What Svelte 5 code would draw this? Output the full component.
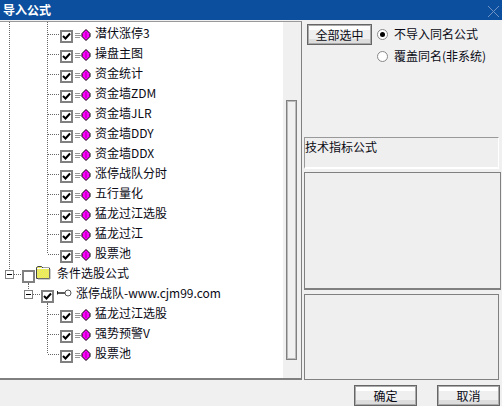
<script>
  const names = ['潜伏涨停3', '操盘主图', '资金统计', '资金墙ZDM', '资金墙JLR', '资金墙DDY', '资金墙DDX', '涨停战队分时', '五行量化', '猛龙过江选股', '猛龙过江', '股票池'];
  const children = ['猛龙过江选股', '强势预警V', '股票池'];
</script>

{#snippet check(x, checked)}
  <rect x={x + 1} y="7" width="11" height="11" fill="#fff" stroke="#808080" stroke-width="2" />
  {#if checked}
    <path d="M{x + 3} 12l2.500 2.500l4.500 -5" fill="none" stroke="#000" stroke-width="2" />
  {/if}
{/snippet}

{#snippet expander(x)}
  <rect x={x + 0.5} y="6.5" width="8" height="8" fill="#fff" stroke="#808080" />
  <path d="M{x + 2} 10.5h5" stroke="#000" />
{/snippet}

{#snippet gem()}
  <path d="M75 9.5h5M75 11.5h6M75 13.5h5" stroke="#999" />
  <path d="M86 5.5l4 4v3l-4 4l-4-4v-3z" fill="#f0f" stroke="#000" />
  <path d="M86 8v6" stroke="#a000a0" />
{/snippet}

{#snippet leaf(last, outer)}
  <svg class="glyphs leaf" width="95" height="20">
    {#if outer}<path class="dots" d="M9.5 0v20" />{/if}
    <path class="dots" d={last ? 'M47.5 0v10' : 'M47.5 0v20'} />
    <path class="dots" d="M48 10.5h12" />
    {@render check(60, true)}
    {@render gem()}
  </svg>
{/snippet}

<div class="win">
  <header class="title">
    <span>导入公式</span>
    <svg width="13" height="13" viewBox="0 0 13 13"><path d="M1 1l11 11M12 1l-11 11" stroke="#6f93c4" fill="none" /></svg>
  </header>

  <main class="body">
    <section class="tree-panel">
      <div class="tree">
        <svg class="spacer" width="60" height="2"><path class="dots" d="M9.5 0v2M47.5 0v2" /></svg>

        {#each names as name, i}
          <div class="row">
            {@render leaf(i === names.length - 1, true)}
            <span>{name}</span>
          </div>
        {/each}

        <div class="row">
          <svg class="glyphs" width="57" height="20">
            <defs>
              <pattern id="dither" width="2" height="2" patternUnits="userSpaceOnUse">
                <rect width="2" height="2" fill="#ffff30" />
                <rect width="1" height="1" fill="#d8d890" />
                <rect x="1" y="1" width="1" height="1" fill="#d8d890" />
              </pattern>
            </defs>
            <path class="dots" d="M9.5 0v6" />
            <path class="dots" d="M14 10.5h8" />
            <path class="dots" d="M28.5 19v1" />
            {@render expander(5)}
            {@render check(22, false)}
            <path d="M36.5 14.5v-11l1.5-1h3.500l1.500 1.500h6.500v10.500z" fill="url(#dither)" stroke="#444" />
            <path d="M37 4.500h12" stroke="#fff" />
            <path d="M50 5v10h-12" stroke="#999" fill="none" />
          </svg>
          <span>条件选股公式</span>
        </div>

        <div class="row">
          <svg class="glyphs" width="76" height="20">
            <path class="dots" d="M28.500 0v6" />
            <path class="dots" d="M33 10.500h8" />
            <path class="dots" d="M47.500 19v1" />
            {@render expander(24)}
            {@render check(41, true)}
            <path d="M57 9h8" stroke="#222" stroke-width="1.500" fill="none" />
            <path d="M57.500 7v3.500" stroke="#222" fill="none" />
            <circle cx="68" cy="9" r="3" fill="#fff" stroke="#555" />
          </svg>
          <span>涨停战队-www.cjm99.com</span>
        </div>

        {#each children as name, i}
          <div class="row">
            {@render leaf(i === children.length - 1, false)}
            <span>{name}</span>
          </div>
        {/each}
      </div>
      <div class="track"><div class="thumb"></div></div>
    </section>

    <aside class="side">
      <div class="options">
        <button type="button" class="btn select-all">全部选中</button>
        <div class="radios">
          <label><i class="radio on"></i>不导入同名公式</label>
          <label><i class="radio"></i>覆盖同名(非系统)</label>
        </div>
      </div>
      <div class="box info">技术指标公式</div>
      <div class="box mid"></div>
      <div class="box low"></div>
    </aside>
  </main>

  <footer class="foot">
    <button type="button" class="btn">确定</button>
    <button type="button" class="btn">取消</button>
  </footer>
</div>

<style>
  :global(body) {
    margin: 0;
    background: #f0f0f0;
  }

  .win {
    width: 502px;
    height: 406px;
    display: flex;
    flex-direction: column;
    overflow: hidden;
    background: #f0f0f0;
    color: #0a0a14;
    font: 12px/20px "Noto Sans CJK SC", "Liberation Sans", sans-serif;
  }

  .title {
    flex: none;
    height: 20px;
    box-sizing: border-box;
    display: flex;
    align-items: center;
    justify-content: space-between;
    padding: 0 2px 0 3px;
    background: #0b4f9e;
    color: #fff;
    font-weight: 700;
    margin-bottom: 1px;
  }

  .title svg {
    margin-top: 2px;
    display: block;
  }

  .body {
    flex: none;
    height: 359px;
    display: flex;
  }

  .tree-panel {
    width: 302px;
    box-sizing: border-box;
    display: flex;
    border-top: 1px solid #999;
    border-right: 1px solid #808080;
    border-bottom: 2px solid #808080;
  }

  .tree {
    width: 283px;
    background: #fff;
    overflow: hidden;
  }

  .spacer {
    display: block;
  }

  .row {
    height: 20px;
    display: flex;
    white-space: nowrap;
  }

  .row span {
    line-height: 18px;
  }

  .glyphs {
    flex: none;
    display: block;
    overflow: visible;
  }

  .dots {
    stroke: #666;
    fill: none;
    stroke-dasharray: 1 1;
  }

  .track {
    flex: 1;
    padding: 78px 2px 0 3px;
  }

  .thumb {
    width: 11px;
    height: 260px;
    box-sizing: border-box;
    border: 1px solid #808080;
    box-shadow: inset 0 0 0 1px #bbb;
    background: #f0f0f0;
  }

  .side {
    flex: 1;
    display: flex;
    flex-direction: column;
    padding-left: 2px;
  }

  .options {
    height: 116px;
    box-sizing: border-box;
    padding: 3px 0 0 3px;
    display: flex;
    align-items: flex-start;
    gap: 6px;
  }

  .radios {
    display: flex;
    flex-direction: column;
    gap: 2px;
  }

  .radios label {
    display: flex;
    align-items: center;
    gap: 6px;
    height: 20px;
    line-height: 18px;
  }

  .radio {
    width: 9px;
    height: 9px;
    border-radius: 50%;
    border: 1px solid #888;
    box-sizing: content-box;
    background: #fff;
    display: grid;
    place-items: center;
    margin-left: -1px;
  }

  .radio.on::after {
    content: "";
    width: 5px;
    height: 5px;
    border-radius: 50%;
    background: #000;
  }

  .box {
    box-sizing: border-box;
    border: 1px solid #999;
    background: #efefef;
    line-height: 18px;
  }

  .info {
    height: 32px;
    width: 195px;
    border-right-color: #fff;
    border-bottom: 2px solid #fff;
    margin-bottom: 3px;
  }

  .mid {
    height: 118px;
    width: 197px;
    border: 2px solid #808080;
    border-width: 1px 1px 2px 1px;
    margin-bottom: 4px;
  }

  .low {
    height: 86px;
    width: 195px;
    border: 1px solid #808080;
  }

  .foot {
    flex: 1;
    display: flex;
    justify-content: flex-end;
    align-items: flex-start;
    gap: 20px;
    padding: 5px 2px 0 0;
  }

  .btn {
    width: 63px;
    height: 21px;
    padding: 0;
    box-sizing: border-box;
    border: 1px solid #666;
    outline: none;
    box-shadow: inset 0 0 0 1px #aaa;
    background: linear-gradient(#fff 0 25%, #efefef 25% 75%, #ddd 75%);
    color: #0a0a14;
    font: inherit;
    line-height: 18px;
  }

  .select-all {
    width: 65px;
    flex: none;
  }
</style>
